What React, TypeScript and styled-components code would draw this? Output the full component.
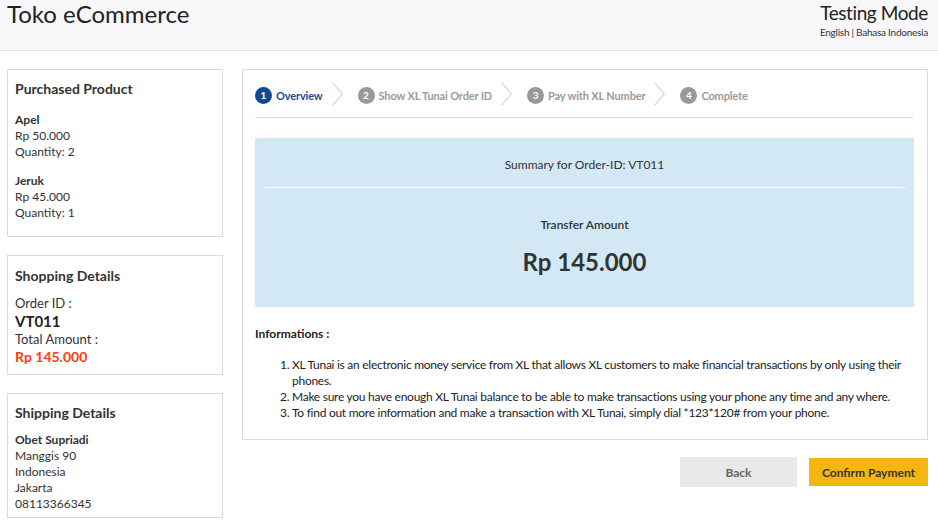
import React from "react";
import styled, { createGlobalStyle } from "styled-components";

const Global = createGlobalStyle`
  html, body { margin: 0; padding: 0; background: #fff; }
  body { font-family: Lato, "Open Sans", sans-serif; color: #333; }
  * { box-sizing: border-box; }
`;

const Header = styled.header`
  height: 51px;
  background: #f7f7f9;
  border-bottom: 1px solid #e6e6e8;
  display: flex;
  justify-content: space-between;
  align-items: flex-start;
  padding: 0 10px 0 7px;
`;

const Title = styled.h1`
  margin: 0;
  font-size: 24px;
  font-weight: 400;
  line-height: 28px;
  color: #222;
`;

const ModeBox = styled.div`
  display: flex;
  flex-direction: column;
  align-items: flex-end;
  padding-top: 1px;
`;

const Mode = styled.div`
  font-size: 19px;
  letter-spacing: -0.4px;
  line-height: 24px;
  color: #222;
`;

const Lang = styled.div`
  font-size: 10px;
  letter-spacing: -0.25px;
  line-height: 12px;
  color: #333;
  margin-top: 1px;
`;

const Page = styled.div`
  display: flex;
  gap: 19px;
  padding: 18px 10px 0 7px;
`;

const Sidebar = styled.aside`
  width: 216px;
  flex: none;
  display: flex;
  flex-direction: column;
  gap: 18px;
`;

const Card = styled.section<{ $pt: number; $pb: number }>`
  border: 1px solid #d8d8d8;
  padding: ${(p) => p.$pt}px 7px ${(p) => p.$pb}px;
`;

const CardTitle = styled.h3<{ $mb: number }>`
  margin: 0 0 ${(p) => p.$mb}px;
  font-size: 14px;
  font-weight: 700;
  line-height: 17px;
  color: #333;
`;

const Group = styled.div`
  & + & { margin-top: 13px; }
`;

const Line = styled.div<{ $bold?: boolean }>`
  font-size: 12px;
  line-height: 16px;
  font-weight: ${(p) => (p.$bold ? 700 : 400)};
  color: #333;
`;

const Label = styled.div`
  font-size: 13px;
  line-height: 18px;
  color: #333;
`;

const Value = styled.div<{ $red?: boolean }>`
  font-size: ${(p) => (p.$red ? 14 : 15)}px;
  line-height: 18px;
  font-weight: 700;
  color: ${(p) => (p.$red ? "#ff3d0f" : "#222")};
`;

const Main = styled.main`
  flex: 1;
  display: flex;
  flex-direction: column;
`;

const Panel = styled.div`
  border: 1px solid #dadada;
  padding: 0 13px 18px 12px;
`;

const Stepper = styled.div`
  display: flex;
  align-items: center;
  padding: 12px 0 11px;
  border-bottom: 1px solid #dedede;
`;

const Step = styled.div<{ $active?: boolean }>`
  display: flex;
  align-items: center;
  gap: 4px;
  font-size: 11px;
  letter-spacing: -0.15px;
  font-weight: 700;
  color: ${(p) => (p.$active ? "#1a4e8e" : "#9a9a9a")};
  padding-top: 2px;
`;

const Circle = styled.span<{ $active?: boolean }>`
  width: 17px;
  height: 17px;
  border-radius: 50%;
  background: ${(p) => (p.$active ? "#0f4c8e" : "#999")};
  color: #fff;
  font-size: 10px;
  letter-spacing: 0;
  font-weight: 700;
  display: inline-flex;
  align-items: center;
  justify-content: center;
`;

const Chevron = styled.svg`
  flex: none;
  margin: 0 15px 0 9px;
`;

const Summary = styled.div`
  margin-top: 20px;
  background: #d2e9f5;
  padding: 19px 0 31px;
  text-align: center;
`;

const SummaryTitle = styled.div`
  font-size: 12px;
  line-height: 16px;
  color: #333;
`;

const Divider = styled.hr`
  border: 0;
  border-top: 1px solid #fff;
  margin: 14px 9px 29px;
`;

const AmountLabel = styled.div`
  font-size: 12px;
  line-height: 16px;
  font-weight: 600;
  color: #333;
`;

const Amount = styled.div`
  margin-top: 14px;
  font-size: 24px;
  line-height: 29px;
  font-weight: 700;
  color: #333;
`;

const InfoTitle = styled.div`
  margin-top: 19px;
  font-size: 12px;
  line-height: 16px;
  font-weight: 700;
  color: #222;
`;

const InfoList = styled.ol`
  margin: 15px 0 0;
  padding-left: 37px;
  font-size: 12px;
  letter-spacing: -0.27px;
  line-height: 16px;
  color: #222;
`;

const Actions = styled.div`
  display: flex;
  justify-content: flex-end;
  align-items: center;
  gap: 12px;
  margin-top: 17px;
`;

const Button = styled.button<{ $primary?: boolean }>`
  border: 0;
  font-family: inherit;
  font-size: 12px;
  font-weight: 700;
  cursor: pointer;
  width: ${(p) => (p.$primary ? 119 : 117)}px;
  height: ${(p) => (p.$primary ? 28 : 30)}px;
  background: ${(p) => (p.$primary ? "#f5b70f" : "#e8e8e8")};
  color: ${(p) => (p.$primary ? "#333" : "#666")};
`;

const Arrow = () => (
  <Chevron width="11" height="24" viewBox="0 0 11 24">
    <polyline points="0.5,0.5 10.3,12 0.5,23.5" fill="none" stroke="#dcdcdc" strokeWidth="1.3" />
  </Chevron>
);

const steps = ["Overview", "Show XL Tunai Order ID", "Pay with XL Number", "Complete"];

export default function App() {
  return (
    <>
      <Global />
      <Header>
        <Title>Toko eCommerce</Title>
        <ModeBox>
          <Mode>Testing Mode</Mode>
          <Lang>English | Bahasa Indonesia</Lang>
        </ModeBox>
      </Header>
      <Page>
        <Sidebar>
          <Card $pt={10} $pb={15}>
            <CardTitle $mb={15}>Purchased Product</CardTitle>
            <Group>
              <Line $bold>Apel</Line>
              <Line>Rp 50.000</Line>
              <Line>Quantity: 2</Line>
            </Group>
            <Group>
              <Line $bold>Jeruk</Line>
              <Line>Rp 45.000</Line>
              <Line>Quantity: 1</Line>
            </Group>
          </Card>
          <Card $pt={11} $pb={8}>
            <CardTitle $mb={10}>Shopping Details</CardTitle>
            <Label>Order ID :</Label>
            <Value>VT011</Value>
            <Label>Total Amount :</Label>
            <Value $red>Rp 145.000</Value>
          </Card>
          <Card $pt={10} $pb={5}>
            <CardTitle $mb={11}>Shipping Details</CardTitle>
            <Line $bold>Obet Supriadi</Line>
            <Line>Manggis 90</Line>
            <Line>Indonesia</Line>
            <Line>Jakarta</Line>
            <Line>08113366345</Line>
          </Card>
        </Sidebar>
        <Main>
          <Panel>
            <Stepper>
              {steps.map((s, i) => (
                <React.Fragment key={s}>
                  <Step $active={i === 0}>
                    <Circle $active={i === 0}>{i + 1}</Circle>
                    {s}
                  </Step>
                  {i < steps.length - 1 && <Arrow />}
                </React.Fragment>
              ))}
            </Stepper>
            <Summary>
              <SummaryTitle>Summary for Order-ID: VT011</SummaryTitle>
              <Divider />
              <AmountLabel>Transfer Amount</AmountLabel>
              <Amount>Rp 145.000</Amount>
            </Summary>
            <InfoTitle>Informations :</InfoTitle>
            <InfoList>
              <li>
                XL Tunai is an electronic money service from XL that allows XL customers to make financial
                transactions by only using their phones.
              </li>
              <li>
                Make sure you have enough XL Tunai balance to be able to make transactions using your phone any
                time and any where.
              </li>
              <li>
                To find out more information and make a transaction with XL Tunai, simply dial *123*120# from
                your phone.
              </li>
            </InfoList>
          </Panel>
          <Actions>
            <Button>Back</Button>
            <Button $primary>Confirm Payment</Button>
          </Actions>
        </Main>
      </Page>
    </>
  );
}
